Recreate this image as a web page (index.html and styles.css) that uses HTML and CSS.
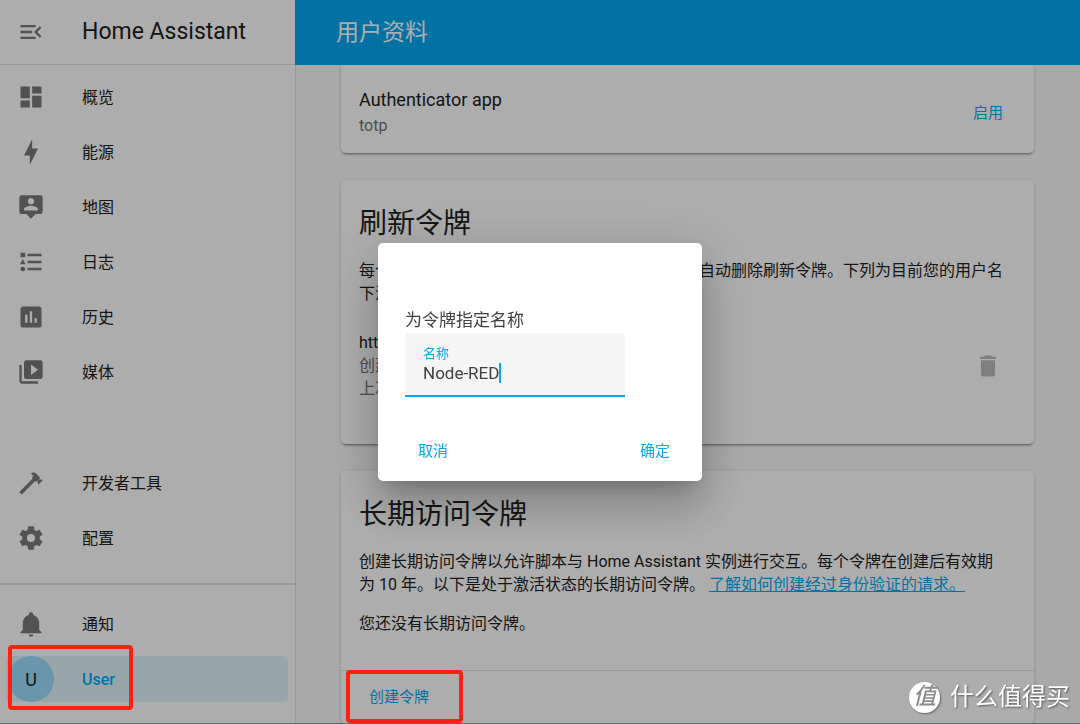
FILE: index.html
```html
<!DOCTYPE html>
<html lang="zh-CN">
<head>
<meta charset="utf-8">
<meta name="viewport" content="width=device-width, initial-scale=1">
<title>Home Assistant</title>
<link rel="stylesheet" href="styles.css">
</head>
<body>
<div class="app">
  <aside class="sidebar">
    <div class="sidebar-header">
      <button class="menu-button" type="button" aria-label="菜单"><svg class="icon" viewBox="0 0 24 24"><path d="M21,15.61L19.59,17L14.58,12L19.59,7L21,8.39L17.44,12L21,15.61M3,6H16V8H3V6M3,13V11H13V13H3M3,18V16H16V18H3Z"/></svg></button>
      <span class="brand">Home Assistant</span>
    </div>
    <nav class="nav">
      <a class="nav-item" href="#"><span class="nav-icon"><svg class="icon" viewBox="0 0 24 24"><path d="M13,3V9H21V3M13,21H21V11H13M3,21H11V15H3M3,13H11V3H3V13Z"/></svg></span>概览</a>
      <a class="nav-item" href="#"><span class="nav-icon"><svg class="icon" viewBox="0 0 24 24"><path d="M11 15H6L13 1V9H18L11 23V15Z"/></svg></span>能源</a>
      <a class="nav-item" href="#"><span class="nav-icon"><svg class="icon" viewBox="0 0 24 24"><path d="M20,2H4A2,2 0 0,0 2,4V16A2,2 0 0,0 4,18H8L12,22L16,18H20A2,2 0 0,0 22,16V4A2,2 0 0,0 20,2M12,4.3C13.5,4.3 14.7,5.5 14.7,7C14.7,8.5 13.5,9.7 12,9.7C10.5,9.7 9.3,8.5 9.3,7C9.3,5.5 10.5,4.3 12,4.3M18,15H6V14.1C6,12.1 10,11 12,11C14,11 18,12.1 18,14.1V15Z"/></svg></span>地图</a>
      <a class="nav-item" href="#"><span class="nav-icon"><svg class="icon" viewBox="0 0 24 24"><path d="M5,9.5L7.5,14H2.5L5,9.5M3,4H7V8H3V4M5,20A2,2 0 0,0 7,18A2,2 0 0,0 5,16A2,2 0 0,0 3,18A2,2 0 0,0 5,20M9,5V7H21V5H9M9,19H21V17H9V19M9,13H21V11H9V13Z"/></svg></span>日志</a>
      <a class="nav-item" href="#"><span class="nav-icon"><svg class="icon" viewBox="0 0 24 24"><path d="M9 17H7V10H9V17M13 17H11V7H13V17M17 17H15V13H17V17M19 3H5C3.9 3 3 3.9 3 5V19C3 20.1 3.9 21 5 21H19C20.1 21 21 20.1 21 19V5C21 3.9 20.1 3 19 3Z"/></svg></span>历史</a>
      <a class="nav-item" href="#"><span class="nav-icon"><svg class="icon" viewBox="0 0 24 24"><path d="M4,6H2V20A2,2 0 0,0 4,22H18V20H4V6M20,2H8A2,2 0 0,0 6,4V16A2,2 0 0,0 8,18H20A2,2 0 0,0 22,16V4A2,2 0 0,0 20,2M12,14.5V5.5L18,10L12,14.5Z"/></svg></span>媒体</a>
      <div class="spacer"></div>
      <a class="nav-item" href="#"><span class="nav-icon"><svg class="icon" viewBox="0 0 24 24"><path d="M2,19.63L13.43,8.2L12.72,7.5L14.14,6.07L12,3.89C13.2,2.7 15.09,2.7 16.27,3.89L19.87,7.5L18.45,8.91H21.29L22,9.62L18.45,13.21L17.74,12.5V9.62L16.27,11.04L15.56,10.33L4.13,21.76L2,19.63Z"/></svg></span>开发者工具</a>
      <a class="nav-item" href="#"><span class="nav-icon"><svg class="icon" viewBox="0 0 24 24"><path d="M12,15.5A3.5,3.5 0 0,1 8.5,12A3.5,3.5 0 0,1 12,8.5A3.5,3.5 0 0,1 15.5,12A3.5,3.5 0 0,1 12,15.5M19.43,12.97C19.47,12.65 19.5,12.33 19.5,12C19.5,11.67 19.47,11.34 19.43,11L21.54,9.37C21.73,9.22 21.78,8.95 21.66,8.73L19.66,5.27C19.54,5.05 19.27,4.96 19.05,5.05L16.56,6.05C16.04,5.66 15.5,5.32 14.87,5.07L14.5,2.42C14.46,2.18 14.25,2 14,2H10C9.75,2 9.54,2.18 9.5,2.42L9.13,5.07C8.5,5.32 7.96,5.66 7.44,6.05L4.95,5.05C4.73,4.96 4.46,5.05 4.34,5.27L2.34,8.73C2.21,8.95 2.27,9.22 2.46,9.37L4.57,11C4.53,11.34 4.5,11.67 4.5,12C4.5,12.33 4.53,12.65 4.57,12.97L2.46,14.63C2.27,14.78 2.21,15.05 2.34,15.27L4.34,18.73C4.46,18.95 4.73,19.03 4.95,18.95L7.44,17.94C7.96,18.34 8.5,18.68 9.13,18.93L9.5,21.58C9.54,21.82 9.75,22 10,22H14C14.25,22 14.46,21.82 14.5,21.58L14.87,18.93C15.5,18.67 16.04,18.34 16.56,17.94L19.05,18.95C19.27,19.03 19.54,18.95 19.66,18.73L21.66,15.27C21.78,15.05 21.73,14.78 21.54,14.63L19.43,12.97Z"/></svg></span>配置</a>
    </nav>
    <div class="nav-bottom">
      <a class="nav-item" href="#"><span class="nav-icon"><svg class="icon" viewBox="0 0 24 24"><path d="M21,19V20H3V19L5,17V11C5,7.9 7.03,5.17 10,4.29C10,4.19 10,4.1 10,4A2,2 0 0,1 12,2A2,2 0 0,1 14,4C14,4.1 14,4.19 14,4.29C16.97,5.17 19,7.9 19,11V17L21,19M14,21A2,2 0 0,1 12,23A2,2 0 0,1 10,21"/></svg></span>通知</a>
      <a class="nav-item nav-item-selected" href="#"><span class="nav-icon avatar">U</span>User<span class="highlight highlight-user"></span></a>
    </div>
  </aside>

  <main class="main">
    <header class="topbar"><h1 class="page-title">用户资料</h1></header>
    <div class="content">
      <section class="card card-clipped">
        <div class="row">
          <div class="module">
            <div class="module-name">Authenticator app</div>
            <div class="module-type">totp</div>
          </div>
          <button class="text-button" type="button">启用</button>
        </div>
      </section>

      <section class="card card-refresh">
        <h2 class="card-title">刷新令牌</h2>
        <p class="text">每个刷新令牌表示一次登录会话。 注销时系统将自动删除刷新令牌。下列为目前您的用户名下活动的刷新令牌。</p>
        <div class="row token">
          <div class="token-info">
            <div>http://</div>
            <div class="secondary">创建于</div>
            <div class="secondary">上次于</div>
          </div>
          <button class="icon-button" type="button" aria-label="删除"><svg class="icon" viewBox="0 0 24 24"><path d="M19,4H15.5L14.5,3H9.5L8.5,4H5V6H19M6,19A2,2 0 0,0 8,21H16A2,2 0 0,0 18,19V7H6V19Z"/></svg></button>
        </div>
      </section>

      <section class="card">
        <h2 class="card-title">长期访问令牌</h2>
        <p class="text">创建长期访问令牌以允许脚本与 Home Assistant 实例进行交互。每个令牌在创建后有效期为 10 年。以下是处于激活状态的长期访问令牌。 <a class="link" href="#">了解如何创建经过身份验证的请求。</a></p>
        <p class="text">您还没有长期访问令牌。</p>
        <div class="card-actions">
          <button class="text-button" type="button">创建令牌</button>
          <span class="highlight highlight-create"></span>
        </div>
      </section>
    </div>
  </main>
</div>

<div class="scrim">
  <form class="dialog" role="dialog" aria-modal="true" aria-labelledby="dialog-text">
    <p class="dialog-text" id="dialog-text">为令牌指定名称</p>
    <div class="field">
      <label class="field-label" for="token-name">名称</label>
      <div class="field-line">
        <input class="field-input" id="token-name" type="text" value="Node-RED" autocomplete="off" spellcheck="false">
        <span class="caret"></span>
      </div>
    </div>
    <div class="dialog-actions">
      <button class="text-button" type="button">取消</button>
      <button class="text-button" type="button">确定</button>
    </div>
  </form>
</div>

<div class="watermark"><span class="watermark-logo"><span class="watermark-glyph">值</span></span>什么值得买</div>
<div class="desktop-edge"></div>
</body>
</html>
```

FILE: styles.css
```css
:root {
  --primary: #03a9f4;
  --text: #212121;
  --secondary: #727272;
  --icon: #7a7a7a;
  --divider: #e0e0e0;
}

* {
  box-sizing: border-box;
}

body {
  margin: 0;
  font-family: Roboto, "Noto Sans CJK SC", sans-serif;
  font-size: 16px;
  line-height: 23px;
  color: var(--text);
  background: #fafafa;
}

button {
  padding: 0;
  border: 0;
  background: none;
  font: inherit;
}

.app {
  display: flex;
  height: 100vh;
  overflow: hidden;
}

.icon {
  display: block;
  width: 28px;
  height: 28px;
  fill: var(--icon);
  fill-rule: evenodd;
}

/* Sidebar */

.sidebar {
  display: flex;
  flex-direction: column;
  flex: 0 0 296px;
  border-right: 1px solid var(--divider);
  background: #fff;
}

.sidebar-header {
  display: flex;
  align-items: center;
  gap: 28px;
  height: 65px;
  padding-left: 8px;
  border-bottom: 1px solid var(--divider);
}

.menu-button {
  display: flex;
  justify-content: center;
  width: 46px;
}

.brand {
  font-size: 23px;
  line-height: 32px;
}

.nav,
.nav-bottom {
  display: flex;
  flex-direction: column;
  gap: 9px;
  padding: 9px 7px 22px 6px;
}

.nav {
  flex: 1;
}

.nav-bottom {
  padding-top: 16px;
  border-top: 2px solid var(--divider);
}

.spacer {
  flex: 1;
}

.nav-item {
  position: relative;
  display: flex;
  align-items: center;
  gap: 28px;
  height: 46px;
  padding-left: 2px;
  border-radius: 4px;
  color: var(--text);
  text-decoration: none;
}

.nav-icon {
  display: flex;
  align-items: center;
  justify-content: center;
  width: 46px;
  height: 46px;
}

.nav-item-selected {
  color: var(--primary);
  font-weight: 500;
  background: #e1f5fe;
}

.avatar {
  border-radius: 50%;
  font-size: 18px;
  font-weight: 400;
  color: var(--text);
  background: #9bdefb;
}

/* Profile page */

.main {
  display: flex;
  flex: 1;
  flex-direction: column;
  min-width: 0;
}

.topbar {
  display: flex;
  flex: 0 0 65px;
  align-items: center;
  margin-left: -1px;
  padding-left: 41px;
  background: var(--primary);
}

.page-title {
  margin: 0;
  font-size: 23px;
  font-weight: 400;
  line-height: 32px;
  color: #fff;
}

.content {
  display: flex;
  flex: 1;
  flex-direction: column;
  gap: 27px;
  min-height: 0;
  padding: 0 46px 0 45px;
  overflow: hidden;
}

.card {
  flex-shrink: 0;
  padding-top: 22px;
  border-radius: 5px;
  background: #fff;
  box-shadow: 0 2px 2px rgba(0, 0, 0, 0.14), 0 1px 5px rgba(0, 0, 0, 0.12), 0 3px 1px -2px rgba(0, 0, 0, 0.2);
}

.card-clipped {
  padding-bottom: 14px;
  border-radius: 0 0 5px 5px;
}

.card-refresh {
  padding-bottom: 44px;
}

.row {
  display: flex;
  align-items: center;
  justify-content: space-between;
  padding: 0 18px;
}

.module-name {
  font-size: 18px;
  line-height: 26px;
}

.module-type {
  line-height: 26px;
  color: var(--secondary);
}

.card-title {
  margin: 0 18px 13px;
  font-size: 28px;
  font-weight: 400;
  line-height: 44px;
}

.text {
  margin: 0 28px 16px 18px;
}

.link {
  color: var(--primary);
}

.token {
  margin-top: 26px;
}

.secondary {
  color: var(--secondary);
}

.icon-button {
  display: flex;
  align-items: center;
  justify-content: center;
  width: 56px;
  height: 56px;
}

.icon-button .icon {
  fill: #bdbdbd;
}

.text-button {
  height: 36px;
  padding: 0 13px;
  font-size: 15px;
  color: var(--primary);
}

.card-actions {
  position: relative;
  display: flex;
  align-items: center;
  height: 54px;
  margin-top: 35px;
  padding-left: 15px;
  border-top: 1px solid var(--divider);
}

/* Dialog */

.scrim {
  position: fixed;
  inset: 0;
  z-index: 5;
  display: flex;
  align-items: center;
  justify-content: center;
  background: rgba(0, 0, 0, 0.32);
}

.dialog {
  width: 324px;
  max-width: 90%;
  padding: 65px 27px 12px;
  border-radius: 5px;
  background: #fff;
  box-shadow: 0 13px 17px -8px rgba(0, 0, 0, 0.2), 0 28px 44px 3px rgba(0, 0, 0, 0.14), 0 10px 53px 9px rgba(0, 0, 0, 0.12);
}

.dialog-text {
  margin: 0;
  font-size: 17px;
  line-height: 25px;
  color: #404040;
}

.field {
  width: 220px;
  height: 64px;
  padding: 12px 18px 0;
  border-bottom: 2px solid var(--primary);
  border-radius: 4px 4px 0 0;
  background: #f5f5f5;
}

.field-label {
  display: block;
  font-size: 13px;
  line-height: 18px;
  color: var(--primary);
}

.field-line {
  display: flex;
  align-items: center;
}

.field-input {
  field-sizing: content;
  min-width: 0;
  height: 20px;
  padding: 0;
  border: 0;
  outline: 0;
  font: inherit;
  font-size: 17px;
  color: #404040;
  background: none;
}

.caret {
  width: 2px;
  height: 20px;
  background: var(--primary);
}

.dialog-actions {
  display: flex;
  justify-content: space-between;
  margin-top: 36px;
  padding-right: 5px;
}

.dialog-actions .text-button:last-child {
  padding-right: 0;
}

/* Annotations above the scrim */

.highlight {
  position: absolute;
  z-index: 10;
  border: 4px solid #ff2010;
  border-radius: 4px;
}

.highlight-user {
  top: -11px;
  left: 2px;
  width: 125px;
  height: 65px;
}

.highlight-create {
  top: -1px;
  left: 5px;
  width: 117px;
  height: 53px;
}

.watermark {
  position: fixed;
  right: 10px;
  bottom: 10px;
  z-index: 10;
  display: flex;
  align-items: center;
  gap: 10px;
  font-size: 24px;
  line-height: 34px;
  color: #fff;
  text-shadow: 1px 1px 2px rgba(0, 0, 0, 0.5);
}

.watermark-logo {
  display: flex;
  align-items: center;
  justify-content: center;
  width: 31px;
  height: 31px;
  border-radius: 50%;
  background: #fff;
  box-shadow: 1px 1px 2px rgba(0, 0, 0, 0.4);
}

.watermark-glyph {
  font-size: 23px;
  font-style: italic;
  font-weight: 500;
  color: #8c8c8c;
  text-shadow: none;
}

.desktop-edge {
  position: fixed;
  right: 0;
  bottom: 0;
  left: 0;
  z-index: 6;
  height: 1px;
  background: #4b7480;
}
```
